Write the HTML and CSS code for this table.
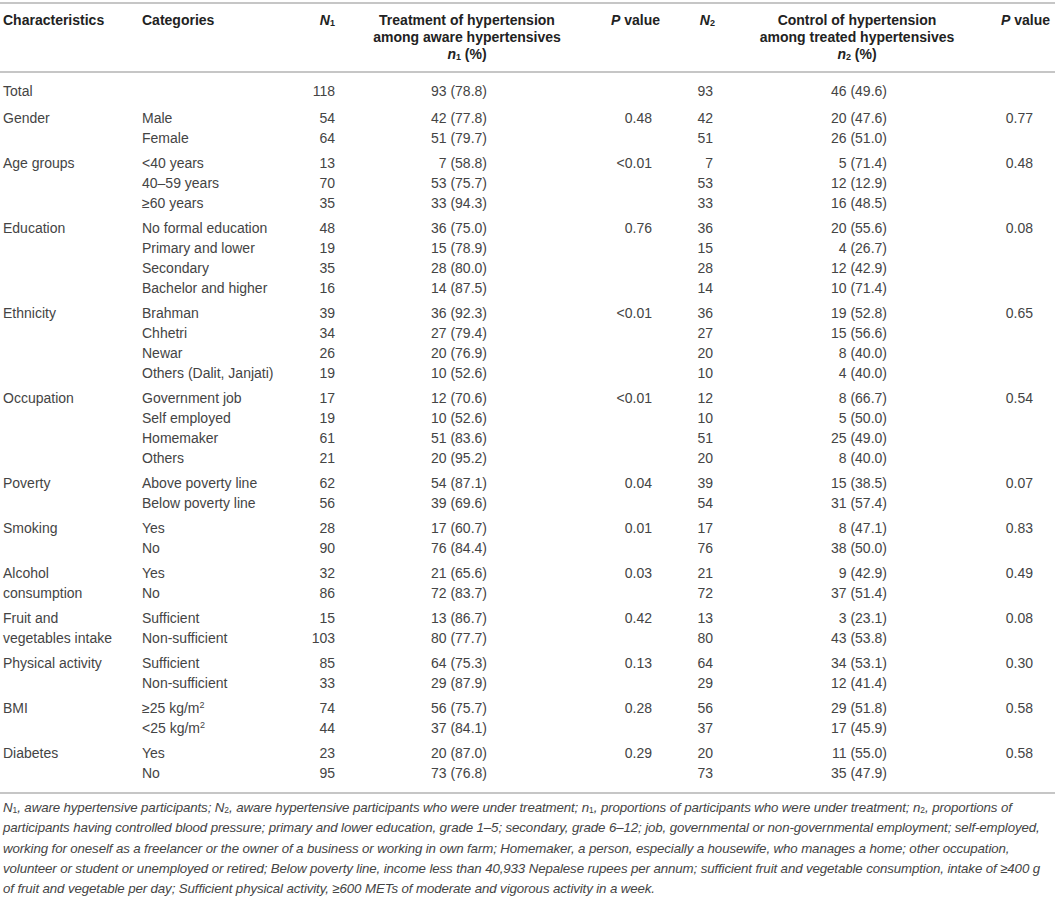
FILE: index.html
```html
<!DOCTYPE html>
<html>
<head>
<meta charset="utf-8">
<link rel="stylesheet" href="styles.css">
</head>
<body>
<div class="wrap">
<table class="tbl">
  <colgroup>
    <col class="c-char"><col class="c-cat"><col class="c-n1"><col class="c-treat"><col class="c-p1"><col class="c-n2"><col class="c-ctrl"><col class="c-p2">
  </colgroup>
  <thead>
    <tr>
      <th class="h-left h-char">Characteristics</th>
      <th class="h-left h-cat">Categories</th>
      <th class="h-n"><i>N</i><sub>1</sub></th>
      <th class="h-center h-treat">Treatment of hypertension<br>among aware hypertensives<br><i>n</i><sub>1</sub> (%)</th>
      <th class="h-p"><i>P</i> value</th>
      <th class="h-n2"><i>N</i><sub>2</sub></th>
      <th class="h-center h-ctrl">Control of hypertension<br>among treated hypertensives<br><i>n</i><sub>2</sub> (%)</th>
      <th class="h-p"><i>P</i> value</th>
    </tr>
  </thead>
  <tbody>
    <tr class="total">
      <td class="char">Total</td><td class="cat"></td><td class="n1">118</td><td class="treat">93 (78.8)</td><td class="p1"></td><td class="n2">93</td><td class="ctrl">46 (49.6)</td><td class="p2"></td>
    </tr>

    <tr class="grp">
      <td class="char" rowspan="2">Gender</td><td class="cat">Male</td><td class="n1">54</td><td class="treat">42 (77.8)</td><td class="p1">0.48</td><td class="n2">42</td><td class="ctrl">20 (47.6)</td><td class="p2">0.77</td>
    </tr>
    <tr>
      <td class="cat">Female</td><td class="n1">64</td><td class="treat">51 (79.7)</td><td class="p1"></td><td class="n2">51</td><td class="ctrl">26 (51.0)</td><td class="p2"></td>
    </tr>

    <tr class="grp">
      <td class="char" rowspan="3">Age groups</td><td class="cat">&lt;40 years</td><td class="n1">13</td><td class="treat">7 (58.8)</td><td class="p1">&lt;0.01</td><td class="n2">7</td><td class="ctrl">5 (71.4)</td><td class="p2">0.48</td>
    </tr>
    <tr>
      <td class="cat">40–59 years</td><td class="n1">70</td><td class="treat">53 (75.7)</td><td class="p1"></td><td class="n2">53</td><td class="ctrl">12 (12.9)</td><td class="p2"></td>
    </tr>
    <tr>
      <td class="cat">≥60 years</td><td class="n1">35</td><td class="treat">33 (94.3)</td><td class="p1"></td><td class="n2">33</td><td class="ctrl">16 (48.5)</td><td class="p2"></td>
    </tr>

    <tr class="grp">
      <td class="char" rowspan="4">Education</td><td class="cat">No formal education</td><td class="n1">48</td><td class="treat">36 (75.0)</td><td class="p1">0.76</td><td class="n2">36</td><td class="ctrl">20 (55.6)</td><td class="p2">0.08</td>
    </tr>
    <tr>
      <td class="cat">Primary and lower</td><td class="n1">19</td><td class="treat">15 (78.9)</td><td class="p1"></td><td class="n2">15</td><td class="ctrl">4 (26.7)</td><td class="p2"></td>
    </tr>
    <tr>
      <td class="cat">Secondary</td><td class="n1">35</td><td class="treat">28 (80.0)</td><td class="p1"></td><td class="n2">28</td><td class="ctrl">12 (42.9)</td><td class="p2"></td>
    </tr>
    <tr>
      <td class="cat">Bachelor and higher</td><td class="n1">16</td><td class="treat">14 (87.5)</td><td class="p1"></td><td class="n2">14</td><td class="ctrl">10 (71.4)</td><td class="p2"></td>
    </tr>

    <tr class="grp">
      <td class="char" rowspan="4">Ethnicity</td><td class="cat">Brahman</td><td class="n1">39</td><td class="treat">36 (92.3)</td><td class="p1">&lt;0.01</td><td class="n2">36</td><td class="ctrl">19 (52.8)</td><td class="p2">0.65</td>
    </tr>
    <tr>
      <td class="cat">Chhetri</td><td class="n1">34</td><td class="treat">27 (79.4)</td><td class="p1"></td><td class="n2">27</td><td class="ctrl">15 (56.6)</td><td class="p2"></td>
    </tr>
    <tr>
      <td class="cat">Newar</td><td class="n1">26</td><td class="treat">20 (76.9)</td><td class="p1"></td><td class="n2">20</td><td class="ctrl">8 (40.0)</td><td class="p2"></td>
    </tr>
    <tr>
      <td class="cat">Others (Dalit, Janjati)</td><td class="n1">19</td><td class="treat">10 (52.6)</td><td class="p1"></td><td class="n2">10</td><td class="ctrl">4 (40.0)</td><td class="p2"></td>
    </tr>

    <tr class="grp">
      <td class="char" rowspan="4">Occupation</td><td class="cat">Government job</td><td class="n1">17</td><td class="treat">12 (70.6)</td><td class="p1">&lt;0.01</td><td class="n2">12</td><td class="ctrl">8 (66.7)</td><td class="p2">0.54</td>
    </tr>
    <tr>
      <td class="cat">Self employed</td><td class="n1">19</td><td class="treat">10 (52.6)</td><td class="p1"></td><td class="n2">10</td><td class="ctrl">5 (50.0)</td><td class="p2"></td>
    </tr>
    <tr>
      <td class="cat">Homemaker</td><td class="n1">61</td><td class="treat">51 (83.6)</td><td class="p1"></td><td class="n2">51</td><td class="ctrl">25 (49.0)</td><td class="p2"></td>
    </tr>
    <tr>
      <td class="cat">Others</td><td class="n1">21</td><td class="treat">20 (95.2)</td><td class="p1"></td><td class="n2">20</td><td class="ctrl">8 (40.0)</td><td class="p2"></td>
    </tr>

    <tr class="grp">
      <td class="char" rowspan="2">Poverty</td><td class="cat">Above poverty line</td><td class="n1">62</td><td class="treat">54 (87.1)</td><td class="p1">0.04</td><td class="n2">39</td><td class="ctrl">15 (38.5)</td><td class="p2">0.07</td>
    </tr>
    <tr>
      <td class="cat">Below poverty line</td><td class="n1">56</td><td class="treat">39 (69.6)</td><td class="p1"></td><td class="n2">54</td><td class="ctrl">31 (57.4)</td><td class="p2"></td>
    </tr>

    <tr class="grp">
      <td class="char" rowspan="2">Smoking</td><td class="cat">Yes</td><td class="n1">28</td><td class="treat">17 (60.7)</td><td class="p1">0.01</td><td class="n2">17</td><td class="ctrl">8 (47.1)</td><td class="p2">0.83</td>
    </tr>
    <tr>
      <td class="cat">No</td><td class="n1">90</td><td class="treat">76 (84.4)</td><td class="p1"></td><td class="n2">76</td><td class="ctrl">38 (50.0)</td><td class="p2"></td>
    </tr>

    <tr class="grp">
      <td class="char" rowspan="2">Alcohol consumption</td><td class="cat">Yes</td><td class="n1">32</td><td class="treat">21 (65.6)</td><td class="p1">0.03</td><td class="n2">21</td><td class="ctrl">9 (42.9)</td><td class="p2">0.49</td>
    </tr>
    <tr>
      <td class="cat">No</td><td class="n1">86</td><td class="treat">72 (83.7)</td><td class="p1"></td><td class="n2">72</td><td class="ctrl">37 (51.4)</td><td class="p2"></td>
    </tr>

    <tr class="grp">
      <td class="char" rowspan="2">Fruit and vegetables intake</td><td class="cat">Sufficient</td><td class="n1">15</td><td class="treat">13 (86.7)</td><td class="p1">0.42</td><td class="n2">13</td><td class="ctrl">3 (23.1)</td><td class="p2">0.08</td>
    </tr>
    <tr>
      <td class="cat">Non-sufficient</td><td class="n1">103</td><td class="treat">80 (77.7)</td><td class="p1"></td><td class="n2">80</td><td class="ctrl">43 (53.8)</td><td class="p2"></td>
    </tr>

    <tr class="grp">
      <td class="char" rowspan="2">Physical activity</td><td class="cat">Sufficient</td><td class="n1">85</td><td class="treat">64 (75.3)</td><td class="p1">0.13</td><td class="n2">64</td><td class="ctrl">34 (53.1)</td><td class="p2">0.30</td>
    </tr>
    <tr>
      <td class="cat">Non-sufficient</td><td class="n1">33</td><td class="treat">29 (87.9)</td><td class="p1"></td><td class="n2">29</td><td class="ctrl">12 (41.4)</td><td class="p2"></td>
    </tr>

    <tr class="grp">
      <td class="char" rowspan="2">BMI</td><td class="cat">≥25 kg/m<sup>2</sup></td><td class="n1">74</td><td class="treat">56 (75.7)</td><td class="p1">0.28</td><td class="n2">56</td><td class="ctrl">29 (51.8)</td><td class="p2">0.58</td>
    </tr>
    <tr>
      <td class="cat">&lt;25 kg/m<sup>2</sup></td><td class="n1">44</td><td class="treat">37 (84.1)</td><td class="p1"></td><td class="n2">37</td><td class="ctrl">17 (45.9)</td><td class="p2"></td>
    </tr>

    <tr class="grp last">
      <td class="char" rowspan="2">Diabetes</td><td class="cat">Yes</td><td class="n1">23</td><td class="treat">20 (87.0)</td><td class="p1">0.29</td><td class="n2">20</td><td class="ctrl">11 (55.0)</td><td class="p2">0.58</td>
    </tr>
    <tr class="end">
      <td class="cat">No</td><td class="n1">95</td><td class="treat">73 (76.8)</td><td class="p1"></td><td class="n2">73</td><td class="ctrl">35 (47.9)</td><td class="p2"></td>
    </tr>
  </tbody>
</table>
<p class="foot"><span class="fl"><i>N</i><sub>1</sub>, aware hypertensive participants; <i>N</i><sub>2</sub>, aware hypertensive participants who were under treatment; <i>n</i><sub>1</sub>, proportions of participants who were under treatment; <i>n</i><sub>2</sub>, proportions of</span><span class="fl">participants having controlled blood pressure; primary and lower education, grade 1–5; secondary, grade 6–12; job, governmental or non-governmental employment; self-employed,</span><span class="fl">working for oneself as a freelancer or the owner of a business or working in own farm; Homemaker, a person, especially a housewife, who manages a home; other occupation,</span><span class="fl">volunteer or student or unemployed or retired; Below poverty line, income less than 40,933 Nepalese rupees per annum; sufficient fruit and vegetable consumption, intake of ≥400 g</span><span class="fl">of fruit and vegetable per day; Sufficient physical activity, ≥600 METs of moderate and vigorous activity in a week.</span></p>
</div>
</body>
</html>
```

FILE: styles.css
```css
html, body {
  margin: 0;
  padding: 0;
  background: #ffffff;
}

body {
  font-family: "Liberation Sans", Arial, Helvetica, sans-serif;
  font-size: 14px;
  color: #444444;
}

.wrap {
  padding-top: 2px;
  width: 1055px;
}

.tbl {
  width: 1055px;
  border-collapse: collapse;
  table-layout: fixed;
}

.c-char { width: 138px; }
.c-cat { width: 144px; }
.c-n1 { width: 63px; }
.c-treat { width: 256px; }
.c-p1 { width: 64px; }
.c-n2 { width: 57px; }
.c-ctrl { width: 276px; }
.c-p2 { width: 57px; }

.tbl th {
  font-weight: bold;
  color: #222222;
  line-height: 17px;
  vertical-align: top;
  padding: 8px 0 8px 0;
  border-top: 2px solid #c6c6c6;
  border-bottom: 2px solid #c6c6c6;
  white-space: nowrap;
}

.tbl sub {
  font-size: 9px;
  vertical-align: -1px;
  line-height: 0;
  font-style: normal;
}

.tbl sup {
  font-size: 9px;
  vertical-align: 5px;
  line-height: 0;
}

.h-left { text-align: left; }
.h-char { padding-left: 3px !important; }
.h-cat { padding-left: 4px !important; }
.h-n { text-align: right; padding-right: 10px !important; }
.h-n2 { text-align: right; padding-right: 7px !important; }
.h-center { text-align: center; }
.h-treat { padding-right: 12px !important; }
.h-ctrl { padding-right: 6px !important; }
.h-p { text-align: right; padding-right: 5px !important; }

.tbl td {
  line-height: 20px;
  padding: 0;
  vertical-align: top;
  white-space: nowrap;
}

.tbl td.char {
  padding-left: 3px;
  padding-right: 16px;
  white-space: normal;
}

.tbl td.cat { padding-left: 4px; }
.tbl td.n1 { text-align: right; padding-right: 10px; }
.tbl td.treat { text-align: right; padding-right: 114px; }
.tbl td.p1 { text-align: right; padding-right: 13px; }
.tbl td.n2 { text-align: right; padding-right: 9px; }
.tbl td.ctrl { text-align: right; padding-right: 111px; }
.tbl td.p2 { text-align: right; padding-right: 22px; }

.tbl tr.total td { padding-top: 8px; padding-bottom: 2px; }
.tbl tr.grp td { padding-top: 5px; }

.tbl tr.end td,
.tbl tr.last td.char {
  padding-bottom: 9px;
  border-bottom: 2px solid #c6c6c6;
}

.foot {
  margin: 0;
  padding: 4px 4px 0 3px;
  font-style: italic;
  font-size: 13.3px;
  letter-spacing: -0.12px;
  line-height: 20.25px;
  color: #444444;
}

.fl {
  display: block;
  white-space: nowrap;
}

.foot sub {
  font-size: 8.5px;
  vertical-align: -1px;
  line-height: 0;
  font-style: normal;
  letter-spacing: 0;
}
```
